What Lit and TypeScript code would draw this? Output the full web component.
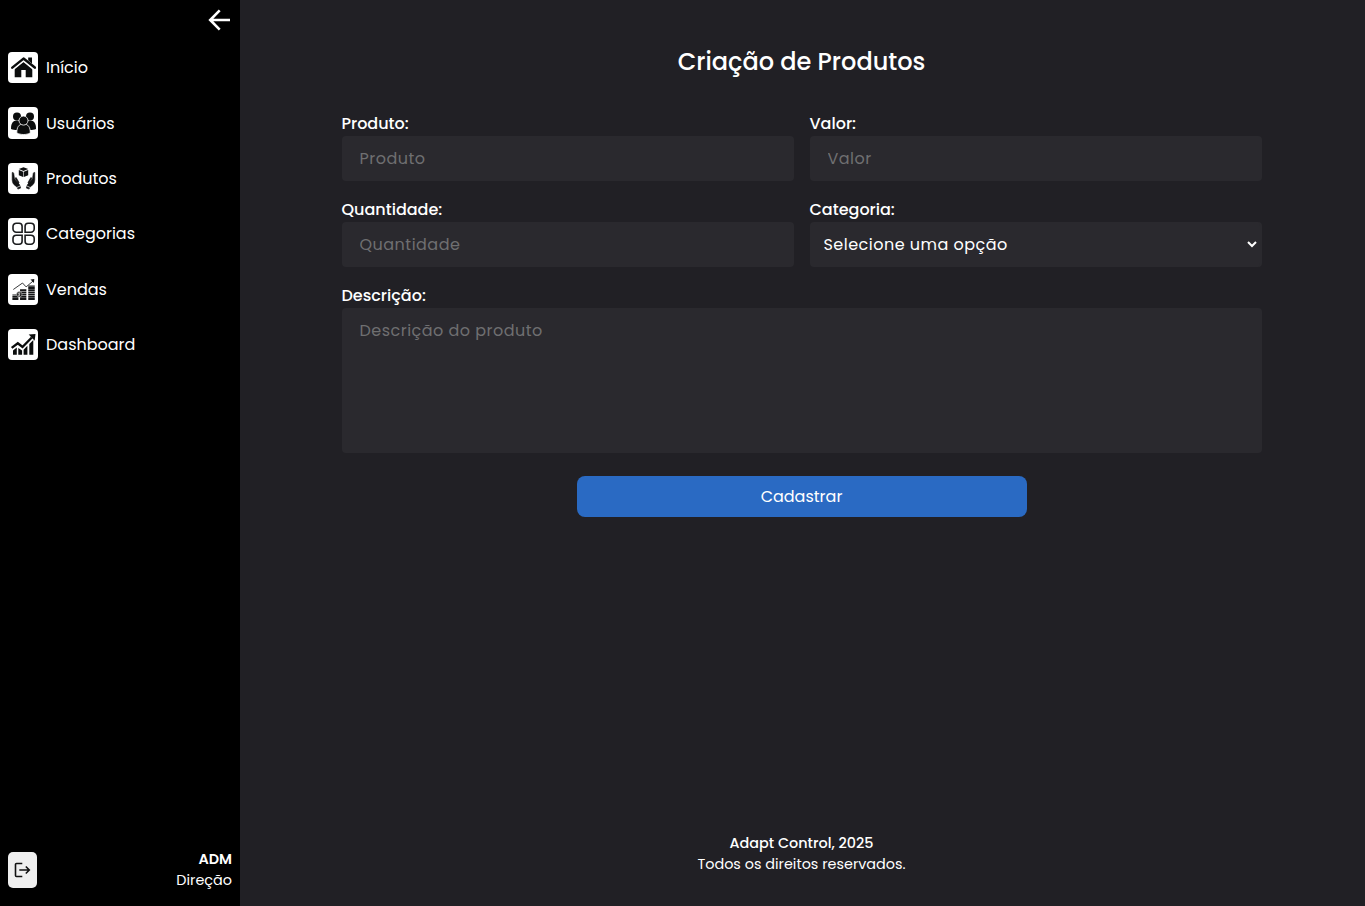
import { LitElement, html, svg, css, TemplateResult } from "lit";
import { customElement } from "lit/decorators.js";

interface NavItem {
  label: string;
  icon: TemplateResult;
}

const houseIcon = svg`
  <path fill="#0b0d0d" d="M6.700 16.500 15.500 9.500l8.800 7V25.300h-6.600v-7.200h-4.400v7.200H6.700z"/>
  <path fill="#0b0d0d" d="M20.200 5.500h3.800v7l-3.800-3z"/>
  <path fill="none" stroke="#fff" stroke-width="4.200" d="M3.800 16.800 15.500 7.300l11.600 9.500"/>
  <path fill="none" stroke="#0b0d0d" stroke-width="2.500" stroke-linecap="round" stroke-linejoin="round" d="M4.300 15.600 15.500 6.600l11.300 9"/>`;

const usersIcon = svg`
  <g fill="#0b0d0d">
    <circle cx="9" cy="9.500" r="4"/><circle cx="22" cy="9.500" r="4"/>
    <path d="M3 22c0-5.500 1.600-8.500 6-8.500s6 3.500 6 8.500c-3.500 1.300-8.700 1.300-12 0z"/>
    <path d="M16 22c0-5 1.600-8.500 6-8.500s6 3 6 8.500c-3.300 1.300-8.500 1.300-12 0z"/>
  </g>
  <g fill="#0b0d0d" stroke="#fff" stroke-width=".8">
    <path d="M8.800 26c0-6 2-9 6.700-9s6.800 3 6.800 9c-4 2-9.500 2-13.500 0z"/>
    <circle cx="15.500" cy="13.600" r="4.500"/>
  </g>`;

const productsIcon = svg`
  <g fill="#101112">
    <path d="m15.500 4.300 4.700 1.800-4.700 1.900-4.700-1.900z"/>
    <path d="m10.800 6.900 4.400 1.800v5.300l-4.400-1.800zM20.200 6.900l-4.400 1.800v5.300l4.400-1.800z"/>
  </g>
  <g fill="#101112" stroke="#101112" stroke-width=".6" stroke-linejoin="round">
    <path d="M4.200 9.500c1-.3 1.500.4 1.600 1.300l.7 4.900 3.700 4.400c1.600 1.600 2.300 3 2.400 5l-2.700 1c-.4-2-1.500-2.600-3.200-3.900-1.700-1.200-2.300-3-2.500-5.400z"/>
    <path d="M26.800 9.500c-1-.3-1.500.4-1.600 1.300l-.7 4.900-3.700 4.400c-1.600 1.600-2.300 3-2.400 5l2.700 1c.4-2 1.500-2.600 3.200-3.900 1.700-1.200 2.300-3 2.500-5.400z"/>
    <path d="m7 15.200 1.200-.6 2.800 4.800-.6 1.200zM24 15.200l-1.200-.6-2.800 4.800.6 1.200z"/>
  </g>
  <path fill="none" stroke="#fff" stroke-width=".7" d="M8.600 24.600l4.400-2M22.400 24.600l-4.400-2"/>`;

const categoriesIcon = svg`
  <g fill="none" stroke="#1b1c1e" stroke-width="1.600">
    <path d="M8.300 5.200h2.800a3 3 0 0 1 3 3v6H8.300a3.300 3.300 0 0 1-3.300-3.300V8.500a3.300 3.300 0 0 1 3.300-3.300z"/>
    <path d="M22.900 5.200h-2.800a3 3 0 0 0-3 3v6h5.800a3.300 3.300 0 0 0 3.300-3.300V8.500a3.300 3.300 0 0 0-3.300-3.300z"/>
    <path d="M8.300 26.200h2.800a3 3 0 0 0 3-3v-6H8.300a3.300 3.300 0 0 0-3.300 3.300v2.400a3.300 3.300 0 0 0 3.300 3.300z"/>
    <path d="M22.900 26.200h-2.800a3 3 0 0 1-3-3v-6h5.800a3.300 3.300 0 0 1 3.300 3.300v2.400a3.300 3.300 0 0 1-3.300 3.300z"/>
  </g>`;

const salesIcon = svg`
  <path fill="none" stroke="#252728" stroke-width=".9" d="m5.300 15.500 9.200-6.500 3.600 3.900 7.300-6.100"/>
  <path fill="#151617" d="m22.500 5.400 3.800-.3-.4 3.800z"/>
  <g fill="none" stroke="#151617">
    <path stroke-width="6" stroke-dasharray="1.800 .4" d="M7.400 25.900v-5.300"/>
    <path stroke-width="6.300" stroke-dasharray="1.800 .4" d="M15.200 25.900V15"/>
    <path stroke-width="6.500" stroke-dasharray="1.800 .4" d="M23.500 25.900V11.500"/>
  </g>
  <circle cx="11.300" cy="20.300" r="2.700" fill="#222" stroke="#ddd" stroke-width=".5"/>
  <path fill="none" stroke="#ddd" stroke-width=".6" d="M12.300 19.200H11c-.8 0-.8 1 0 1s1.100 1.200 0 1.200h-1M11.300 18.500v3.600"/>`;

const dashboardIcon = svg`
  <path fill="#0b0d0d" d="M5 21.500l3.800-3.100v7.300H5zM10.300 19l3.800 2.500v4.200h-3.800zM15.600 20.800l3.800-4v8.900h-3.800zM21.300 15l4-4v14.700h-4z"/>
  <path fill="none" stroke="#0b0d0d" stroke-width="2.400" d="m3.700 18.900 6.100-4.700 4.700 3.800 9.300-9.500"/>
  <path fill="#0b0d0d" d="M20.700 5.600 27.500 5l-.8 6.700z"/>`;

const navItems: NavItem[] = [
  { label: "Início", icon: houseIcon },
  { label: "Usuários", icon: usersIcon },
  { label: "Produtos", icon: productsIcon },
  { label: "Categorias", icon: categoriesIcon },
  { label: "Vendas", icon: salesIcon },
  { label: "Dashboard", icon: dashboardIcon },
];

@customElement("app-root")
export class AppRoot extends LitElement {
  static styles = css`
    :host {
      display: flex;
      height: 906px;
      background: #212025;
      color: #fff;
      font: 400 16px/24px Poppins, Inter, sans-serif;
    }
    * { box-sizing: border-box; }
    .sidebar {
      width: 240px;
      height: 100%;
      flex: none;
      background: #000;
      display: flex;
      flex-direction: column;
      padding: 8px 8px 15px;
    }
    .back { align-self: flex-end; display: block; width: 26px; height: 24px; }
    .nav { display: flex; flex-direction: column; gap: 24px; margin-top: 20px; }
    .item { display: flex; align-items: center; gap: 8px; height: 31.4px; }
    .item span { padding-top: 1.1px; }
    .tile { width: 30px; height: 31.4px; background: #fff; border-radius: 4px; flex: none; }
    .tile svg { display: block; }
    .user { margin-top: auto; display: flex; justify-content: space-between; align-items: center; }
    .logout {
      width: 29px; height: 36px; border: 0; border-radius: 5px; background: #efefef;
      padding: 0 0 1px; display: grid; place-items: center;
    }
    .who, .foot { font-size: 14.4px; line-height: 21px; }
    .who { text-align: right; }
    .who b, .foot b { display: block; }
    .who b { font-weight: 600; }
    .foot b { font-weight: 500; }
    .main {
      flex: 1; display: flex; flex-direction: column; align-items: center;
      padding: 44px 2px 31px 0;
    }
    h1 { margin: 0; font-size: 24px; line-height: 36px; font-weight: 500; }
    .form { display: grid; grid-template-columns: 452px 452px; gap: 17px 16px; margin-top: 32px; }
    .field { display: flex; flex-direction: column; }
    .field label { font-weight: 500; line-height: 24px; }
    .wide { grid-column: 1 / -1; }
    input, select, textarea {
      width: 100%; height: 45px; border: 0; border-radius: 4px; background: #2a292e; color: #fff;
      font: inherit; letter-spacing: 0.48px; padding: 0 18px; outline: 0; display: block;
    }
    select { padding: 0 0 0 10px; border-right: 2px solid #2a292e; }
    textarea { height: 145px; padding-top: 11px; resize: none; }
    ::placeholder { color: #6f6f71; opacity: 1; }
    .submit {
      width: 450px; height: 41px; margin-top: 23px; border: 0; border-radius: 8px;
      background: #2a6ac3; color: #fff; font: inherit;
    }
    .foot { margin-top: auto; text-align: center; }
  `;

  render() {
    return html`
      <aside class="sidebar">
        <svg class="back" viewBox="0 0 26 24" fill="none" stroke="#fff" stroke-width="2.600">
          <path d="M24 12H4.500M13.700 2.400 4.200 12l9.500 9.600" />
        </svg>
        <nav class="nav">
          ${navItems.map(
            (n) => html`<div class="item">
              <div class="tile"><svg width="30" height="31" viewBox="0 0 30 31">${n.icon}</svg></div>
              <span>${n.label}</span>
            </div>`
          )}
        </nav>
        <div class="user">
          <button class="logout" aria-label="Sair">
            <svg width="17" height="16" viewBox="0 0 17 16" fill="none" stroke="#111" stroke-width="1.600">
              <path d="M8.300 1.500H2.500a1 1 0 0 0-1 1v11a1 1 0 0 0 1 1h5.800M5.300 8h10M11.800 4.500 15.300 8l-3.500 3.500" />
            </svg>
          </button>
          <div class="who"><b>ADM</b><span>Direção</span></div>
        </div>
      </aside>
      <main class="main">
        <h1>Criação de Produtos</h1>
        <div class="form">
          <div class="field"><label>Produto:</label><input placeholder="Produto" /></div>
          <div class="field"><label>Valor:</label><input placeholder="Valor" /></div>
          <div class="field"><label>Quantidade:</label><input placeholder="Quantidade" /></div>
          <div class="field">
            <label>Categoria:</label>
            <select><option>Selecione uma opção</option></select>
          </div>
          <div class="field wide">
            <label>Descrição:</label>
            <textarea placeholder="Descrição do produto"></textarea>
          </div>
        </div>
        <button class="submit">Cadastrar</button>
        <footer class="foot"><b>Adapt Control, 2025</b><span>Todos os direitos reservados.</span></footer>
      </main>
    `;
  }
}
